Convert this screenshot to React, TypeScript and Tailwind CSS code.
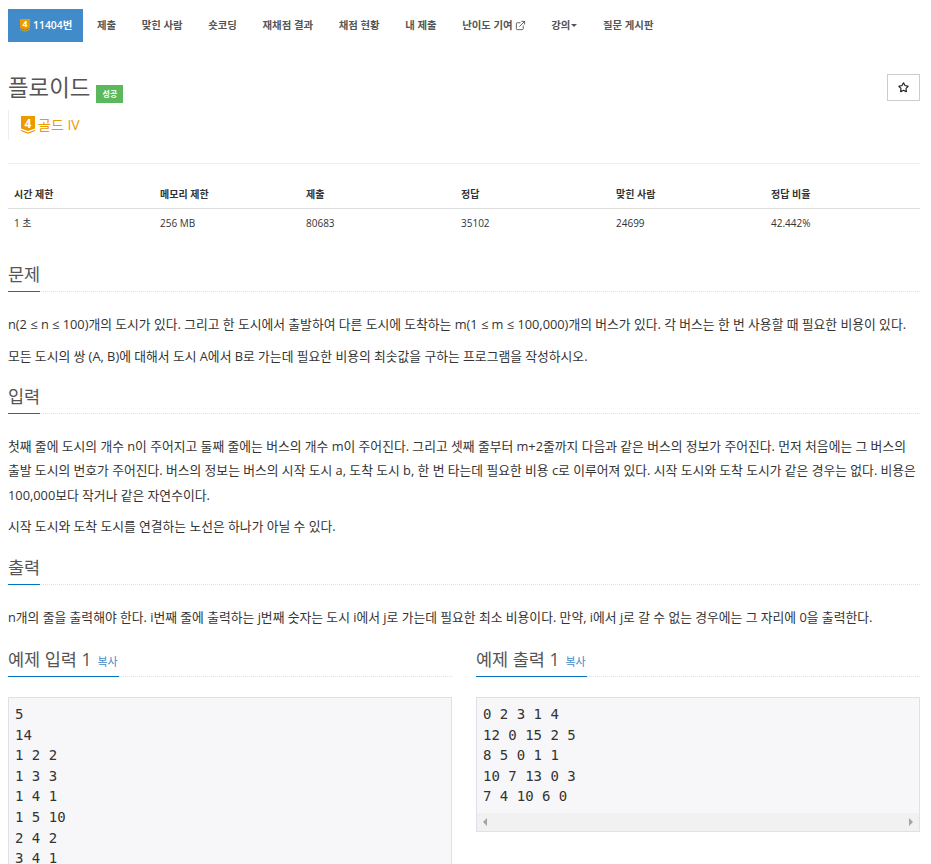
import { ExternalLink, Star } from 'lucide-react';

const FONT = "font-['Open_Sans','Noto_Sans_CJK_KR',sans-serif]";

function TierBadge({ className }: { className: string }) {
  return (
    <svg viewBox="0 0 14 18" className={`${className} overflow-visible`}>
      <path d="M0 0H14V12.5L7 15L0 12.5Z" fill="#ec9a00" />
      <path d="M0 14.5L7 17L14 14.5" fill="none" stroke="#ec9a00" strokeWidth="1.3" />
      <text x="7" y="11.5" textAnchor="middle" fontSize="12" fontWeight="700" fill="#fff" fontFamily="Open Sans, sans-serif">
        4
      </text>
    </svg>
  );
}

function SectionTitle({ title, copy }: { title: string; copy?: boolean }) {
  return (
    <div className="flex h-[32px] border-b border-dotted border-[#e0e0e0]">
      <h2 className="flex h-[32px] shrink-0 items-baseline border-b border-[#0076c0] pt-[2px] text-[17.5px] leading-[25px] text-[#555]">
        <span>{title}</span>
        {copy && <span className="ml-[6px] pr-px text-[11px] text-[#428bca]">복사</span>}
      </h2>
    </div>
  );
}

function SampleBox({ lines, scroll }: { lines: string[]; scroll?: boolean }) {
  return (
    <div className="mt-[20px] border border-[#e0e0e8] bg-[#f7f7f9]">
      <pre className="px-[6px] pt-[6px] pb-[6px] font-['DejaVu_Sans_Mono',monospace] text-[14px] leading-[20.57px] text-[#333]">
        {lines.join('\n')}
      </pre>
      {scroll && (
        <div className="flex h-[18px] items-center justify-between bg-[#f1f1f1] px-[6px]">
          <span className="h-0 w-0 border-y-[4px] border-r-[4px] border-y-transparent border-r-[#a3a3a3]" />
          <span className="h-0 w-0 border-y-[4px] border-l-[4px] border-y-transparent border-l-[#a3a3a3]" />
        </div>
      )}
    </div>
  );
}

export default function App() {
  const tabs = ['제출', '맞힌 사람', '숏코딩', '재채점 결과', '채점 현황', '내 제출'];
  const stats = [
    { label: '시간 제한', value: '1 초', w: 'w-[146px]' },
    { label: '메모리 제한', value: '256 MB', w: 'w-[146px]' },
    { label: '제출', value: '80683', w: 'w-[155px]' },
    { label: '정답', value: '35102', w: 'w-[155px]' },
    { label: '맞힌 사람', value: '24699', w: 'w-[155px]' },
    { label: '정답 비율', value: '42.442%', w: 'flex-1' },
  ];

  return (
    <div className={`${FONT} h-[864px] overflow-hidden bg-white pl-2 pr-[11px] text-[#333]`}>
      {/* Tabs */}
      <nav className="mt-[9px] flex h-[33px] items-center text-[10.4px] font-semibold text-[#555]">
        <div className="flex h-[33px] w-[75px] items-center gap-[3px] bg-[#428bca] pl-[12px] text-white">
          <TierBadge className="h-[13px] w-[10px]" />
          <span>11404번</span>
        </div>
        <div className="flex pl-[14px]">
          {tabs.map((t) => (
            <span key={t} className="mr-[25.6px]">
              {t}
            </span>
          ))}
          <span className="mr-[25.6px] flex items-center gap-[2px]">
            난이도 기여 <ExternalLink size={11} strokeWidth={2} />
          </span>
          <span className="mr-[25.6px] flex items-center gap-[1px]">
            강의
            <span className="h-0 w-0 border-x-[3px] border-t-[3px] border-x-transparent border-t-[#555]" />
          </span>
          <span>질문 게시판</span>
        </div>
      </nav>

      {/* Title */}
      <div className="mt-[32px] flex items-start justify-between">
        <h1 className="flex items-end text-[22.4px] leading-[28px] text-[#555]">
          플로이드
          <span className="mb-[-1px] ml-[6px] flex h-[18px] w-[27px] items-center justify-center bg-[#5cb85c] text-[8px] font-bold text-white">
            성공
          </span>
        </h1>
        <button className="flex h-[27px] w-[33px] items-center justify-center border border-[#ccc] bg-white text-[#222]">
          <Star size={11} strokeWidth={2.5} />
        </button>
      </div>
      <div className="mt-[8px] flex h-[30px] items-center gap-[3px] border-l border-[#eee] pl-[12px] text-[14px] leading-[28px] text-[#ec9a00]">
        <TierBadge className="h-[18px] w-[14px]" />
        <span className="-mt-px">골드 IV</span>
      </div>

      <div className="mt-[23px] border-t border-[#eee]" />

      {/* Limits table */}
      <div className="mt-[16px]">
        <div className="flex h-[29px] items-center border-b border-[#ddd] text-[10px] font-bold">
          {stats.map((s) => (
            <div key={s.label} className={`${s.w} pl-[6px]`}>
              {s.label}
            </div>
          ))}
        </div>
        <div className="flex h-[28px] items-center text-[10px]">
          {stats.map((s) => (
            <div key={s.label} className={`${s.w} pl-[6px]`}>
              {s.value}
            </div>
          ))}
        </div>
      </div>

      <section className="mt-[23px] text-[12.8px] leading-[24.5px] text-[#333]">
        <SectionTitle title="문제" />
        <p className="mt-[20px]">
          n(2 ≤ n ≤ 100)개의 도시가 있다. 그리고 한 도시에서 출발하여 다른 도시에 도착하는 m(1 ≤ m ≤ 100,000)개의 버스가 있다. 각 버스는 한 번 사용할 때 필요한 비용이 있다.
        </p>
        <p className="mt-[7px]">
          모든 도시의 쌍 (A, B)에 대해서 도시 A에서 B로 가는데 필요한 비용의 최솟값을 구하는 프로그램을 작성하시오.
        </p>
      </section>

      <section className="mt-[14px] text-[12.8px] leading-[24.4px] text-[#333]">
        <SectionTitle title="입력" />
        <p className="mt-[20px]">
          첫째 줄에 도시의 개수 n이 주어지고 둘째 줄에는 버스의 개수 m이 주어진다. 그리고 셋째 줄부터 m+2줄까지 다음과 같은 버스의 정보가 주어진다. 먼저 처음에는 그 버스의 출발 도시의 번호가 주어진다. 버스의 정보는 버스의 시작 도시 a, 도착 도시 b, 한 번 타는데 필요한 비용 c로 이루어져 있다. 시작 도시와 도착 도시가 같은 경우는 없다. 비용은 100,000보다 작거나 같은 자연수이다.
        </p>
        <p className="mt-[7px]">시작 도시와 도착 도시를 연결하는 노선은 하나가 아닐 수 있다.</p>
      </section>

      <section className="mt-[14px] text-[12.8px] leading-[24.5px] text-[#333]">
        <SectionTitle title="출력" />
        <p className="mt-[20px]">
          n개의 줄을 출력해야 한다. i번째 줄에 출력하는 j번째 숫자는 도시 i에서 j로 가는데 필요한 최소 비용이다. 만약, i에서 j로 갈 수 없는 경우에는 그 자리에 0을 출력한다.
        </p>
      </section>

      {/* Samples */}
      <div className="mt-[16px] grid grid-cols-2 gap-x-[24px]">
        <div>
          <SectionTitle title="예제 입력 1" copy />
          <SampleBox lines={['5', '14', '1 2 2', '1 3 3', '1 4 1', '1 5 10', '2 4 2', '3 4 1']} />
        </div>
        <div>
          <SectionTitle title="예제 출력 1" copy />
          <SampleBox lines={['0 2 3 1 4', '12 0 15 2 5', '8 5 0 1 1', '10 7 13 0 3', '7 4 10 6 0']} scroll />
        </div>
      </div>
    </div>
  );
}
